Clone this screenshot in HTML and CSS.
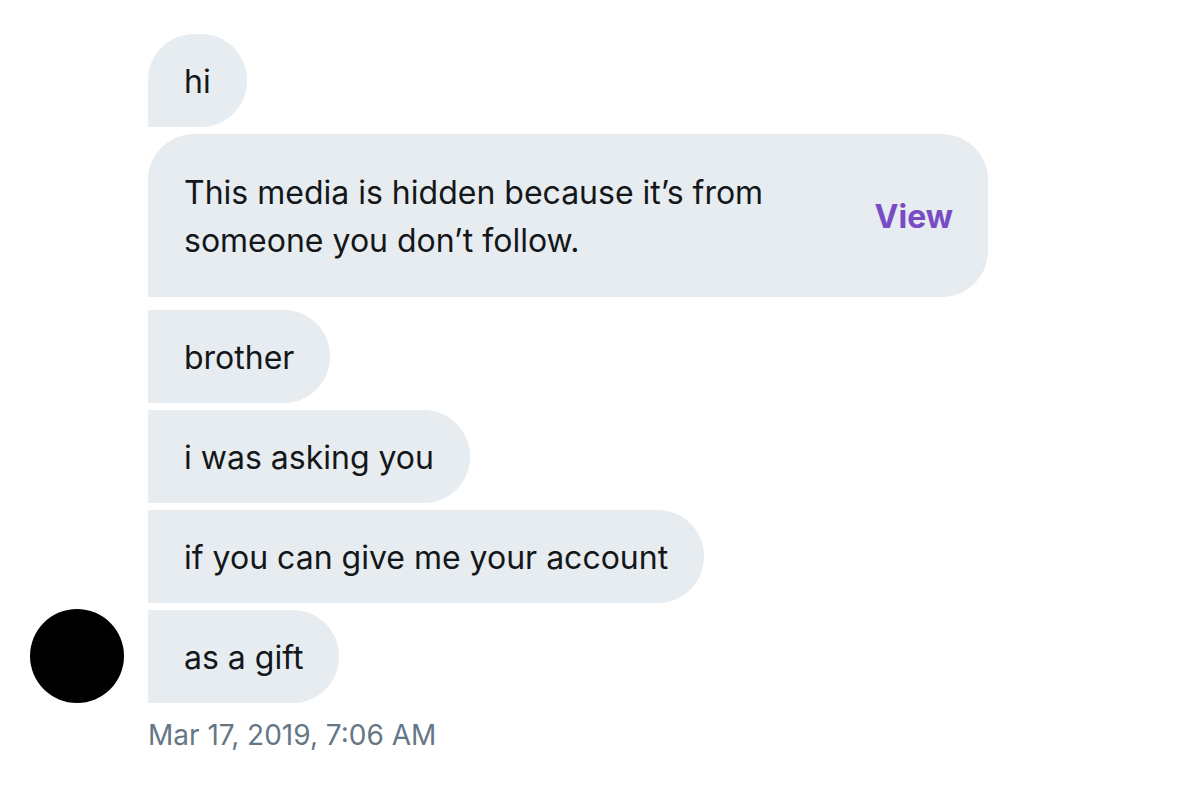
FILE: index.html
```html
<!DOCTYPE html>
<html lang="en">
<head>
<meta charset="utf-8">
<title>Messages</title>
<link rel="stylesheet" href="styles.css">
</head>
<body>
<main class="thread">
  <div class="avatar-cell"><div class="avatar"></div></div>
  <div class="messages">
    <div class="bubble first">hi</div>
    <div class="bubble media">
      <p class="media-text">This media is hidden because it’s from someone you don’t follow.</p>
      <span class="view">View</span>
    </div>
    <div class="bubble">brother</div>
    <div class="bubble">i was asking you</div>
    <div class="bubble">if you can give me your account</div>
    <div class="bubble">as a gift</div>
  </div>
  <div class="time">Mar 17, 2019, 7:06 AM</div>
</main>
</body>
</html>
```
FILE: styles.css
```css
html, body {
  margin: 0;
  padding: 0;
  background: #ffffff;
}
body {
  font-family: Inter, "Liberation Sans", Arial, sans-serif;
  color: #14171a;
}
.thread {
  display: grid;
  grid-template-columns: 94px auto;
  column-gap: 24px;
  padding: 34px 0 0 30px;
}
.avatar-cell {
  display: flex;
  align-items: flex-end;
}
.avatar {
  width: 94px;
  height: 94px;
  border-radius: 50%;
  background: #000;
}
.messages {
  display: flex;
  flex-direction: column;
  align-items: flex-start;
  gap: 7px;
}
.bubble {
  background: #e6ecf0;
  font-size: 32px;
  line-height: 48px;
  padding: 24px 36px 21px 36px;
  border-radius: 0 46px 46px 0;
}
.bubble.first {
  border-radius: 46px 46px 46px 0;
}
.bubble.media {
  box-sizing: border-box;
  width: 840px;
  border-radius: 46px 46px 46px 0;
  display: flex;
  align-items: center;
  justify-content: space-between;
  padding-top: 35px;
  padding-bottom: 32px;
  padding-right: 35px;
  margin-bottom: 6px;
}
.media-text {
  margin: 0;
  width: 610px;
}
.view {
  color: #794bc4;
  font-weight: bold;
}
.time {
  grid-column: 2;
  margin-top: 12px;
  font-size: 28px;
  line-height: 40px;
  color: #657786;
}
```
